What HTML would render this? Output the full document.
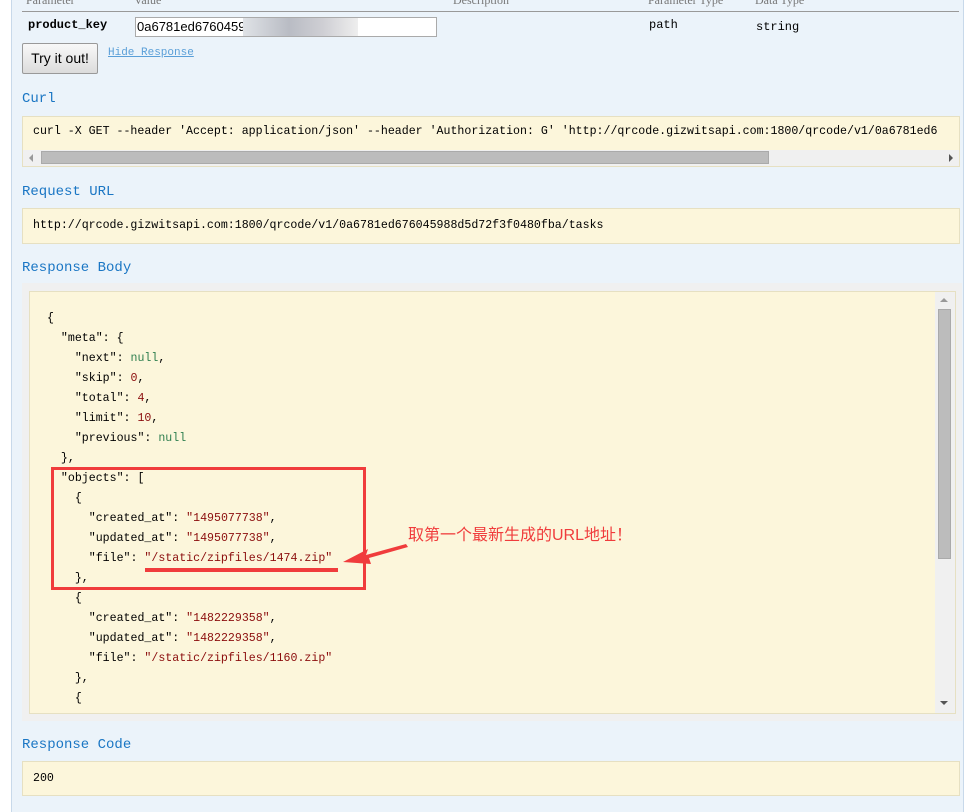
<!DOCTYPE html>
<html><head><meta charset="utf-8"><style>
*{margin:0;padding:0;box-sizing:border-box}
body{width:980px;height:812px;background:#fff;position:relative;overflow:hidden;font-family:"Liberation Sans",sans-serif}
.a{position:absolute}
.panel{left:11px;top:0;width:953px;height:812px;background:#ebf3fa;border-left:1px solid #c8d9ea;border-right:1px solid #c8d9ea}
.mono{font-family:"Liberation Mono",monospace;font-size:11.6px;white-space:pre}
.h{font-family:"Liberation Mono",monospace;font-size:14px;color:#1a76c4}
.box{background:#fcf6db;border:1px solid #e6e0c2}
.k{color:#000}.s{color:#8b0d0d}.n{color:#2f7f4f}.num{color:#8b0d0d}
.j{white-space:normal;font-family:"Liberation Mono",monospace;font-size:11.6px}
.j div{height:20px;line-height:20px;white-space:pre}
</style></head><body>
<div class="a panel"></div>
<div class="a" style="left:26px;top:-7px;font-family:'Liberation Serif',serif;font-size:12px;color:#777">Parameter</div>
<div class="a" style="left:134px;top:-7px;font-family:'Liberation Serif',serif;font-size:12px;color:#777">Value</div>
<div class="a" style="left:453px;top:-7px;font-family:'Liberation Serif',serif;font-size:12px;color:#777">Description</div>
<div class="a" style="left:648px;top:-7px;font-family:'Liberation Serif',serif;font-size:12px;color:#777">Parameter Type</div>
<div class="a" style="left:755px;top:-7px;font-family:'Liberation Serif',serif;font-size:12px;color:#777">Data Type</div>
<div class="a" style="left:22px;top:11px;width:937px;height:1px;background:#999"></div>
<div class="a" style="left:28px;top:18px;font-family:'Liberation Mono',monospace;font-size:12px;font-weight:bold;color:#000">product_key</div>
<div class="a" style="left:135px;top:17px;width:302px;height:20px;background:#fff;border:1px solid #aaa;font-size:13px;line-height:18px;padding-left:1px">0a6781ed6760459</div>
<div class="a" style="left:243px;top:18px;width:115px;height:18px;background:linear-gradient(90deg,#dfe2e6,#b9bcc4 40%,#cfcfd4 70%,#eee)"></div>
<div class="a" style="left:649px;top:18px;font-family:'Liberation Mono',monospace;font-size:12px">path</div>
<div class="a" style="left:756px;top:20px;font-family:'Liberation Mono',monospace;font-size:12px">string</div>
<div class="a" style="left:22px;top:43px;width:76px;height:31px;border:1px solid #999;border-radius:2px;background:linear-gradient(#f8f8f8,#dcdcdc);font-size:14px;text-align:center;line-height:29px">Try it out!</div>
<div class="a" style="left:108px;top:47px;font-family:'Liberation Mono',monospace;font-size:11px;color:#5a9fd8;text-decoration:underline">Hide Response</div>
<div class="a h" style="left:22px;top:91px">Curl</div>
<div class="a box" style="left:22px;top:116px;width:938px;height:51px;overflow:hidden">
<div class="mono" style="position:absolute;left:10px;top:8px">curl -X GET --header 'Accept: application/json' --header 'Authorization: G' 'http://qrcode.gizwitsapi.com:1800/qrcode/v1/0a6781ed6</div>
<div style="position:absolute;left:0;top:33px;width:936px;height:16px;background:#f0f0f0"></div>
<div style="position:absolute;left:18px;top:34px;width:728px;height:13px;background:#bcbcbc;border:1px solid #aaa"></div>
<div style="position:absolute;left:6px;top:37px;border:4px solid transparent;border-right:4px solid #999;border-left:0"></div>
<div style="position:absolute;left:926px;top:37px;border:4px solid transparent;border-left:4px solid #555;border-right:0"></div>
</div>
<div class="a h" style="left:22px;top:184px">Request URL</div>
<div class="a box" style="left:22px;top:208px;width:938px;height:36px"><div class="mono" style="position:absolute;left:10px;top:10px">http://qrcode.gizwitsapi.com:1800/qrcode/v1/0a6781ed676045988d5d72f3f0480fba/tasks</div></div>
<div class="a h" style="left:22px;top:260px">Response Body</div>
<div class="a" style="left:22px;top:283px;width:940px;height:438px;background:#f0f0f0"></div>
<div class="a box" style="left:29px;top:291px;width:927px;height:423px;overflow:hidden">
<div class="j" style="position:absolute;left:17px;top:17px"><div>{</div><div>  <span class="k">"meta"</span>: {</div><div>    "next": <span class="n">null</span>,</div><div>    "skip": <span class="num">0</span>,</div><div>    "total": <span class="num">4</span>,</div><div>    "limit": <span class="num">10</span>,</div><div>    "previous": <span class="n">null</span></div><div>  },</div><div>  "objects": [</div><div>    {</div><div>      "created_at": <span class="s">"1495077738"</span>,</div><div>      "updated_at": <span class="s">"1495077738"</span>,</div><div>      "file": <span class="s">"/static/zipfiles/1474.zip"</span></div><div>    },</div><div>    {</div><div>      "created_at": <span class="s">"1482229358"</span>,</div><div>      "updated_at": <span class="s">"1482229358"</span>,</div><div>      "file": <span class="s">"/static/zipfiles/1160.zip"</span></div><div>    },</div><div>    {</div></div>
<div style="position:absolute;left:905px;top:0;width:20px;height:423px;background:#f0f0f0"></div>
<div style="position:absolute;left:908px;top:17px;width:13px;height:250px;background:#bcbcbc;border:1px solid #aaa"></div>
<div style="position:absolute;left:910px;top:6px;border:4px solid transparent;border-bottom:4px solid #999;border-top:0"></div>
<div style="position:absolute;left:910px;top:409px;border:4px solid transparent;border-top:4px solid #555;border-bottom:0"></div>
</div>
<div class="a" style="left:51px;top:467px;width:315px;height:123px;border:3px solid #f03c3c"></div>
<div class="a" style="left:145px;top:568px;width:193px;height:4px;background:#f03c3c"></div>
<svg class="a" style="left:330px;top:535px" width="90" height="40"><polygon points="76,9 36,20 38,14 13,27 41,29 39,23 78,12" fill="#f03c3c"/></svg>
<div class="a" style="left:408px;top:521px;font-family:'Liberation Sans','Noto Sans CJK SC',sans-serif;font-size:16px;color:#f03c3c">取第一个最新生成的URL地址！</div>
<div class="a h" style="left:22px;top:737px">Response Code</div>
<div class="a box" style="left:22px;top:761px;width:938px;height:35px"><div class="mono" style="position:absolute;left:10px;top:10px">200</div></div>
</body></html>
